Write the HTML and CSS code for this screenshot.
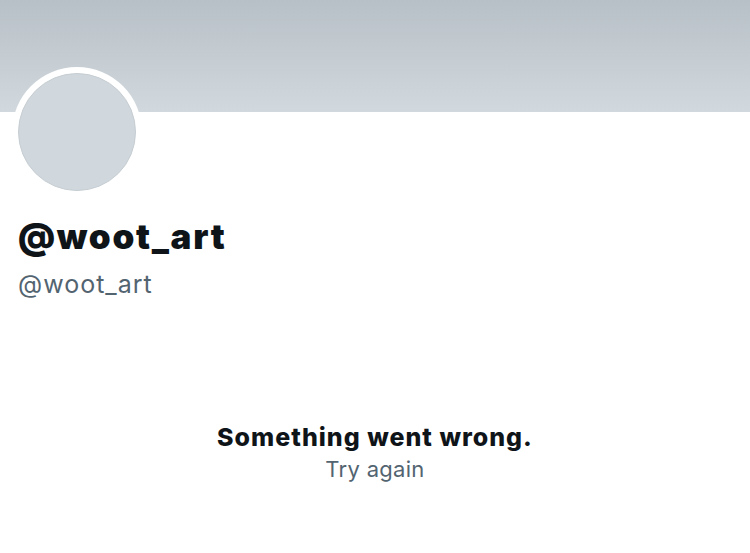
FILE: index.html
```html
<!DOCTYPE html>
<html>
<head>
<meta charset="utf-8">
<link rel="stylesheet" href="styles.css">
</head>
<body>
<div class="page">
  <div class="banner"></div>
  <div class="profile">
    <div class="avatar-ring"><div class="avatar"></div></div>
    <div class="name">@woot_art</div>
    <div class="handle">@woot_art</div>
  </div>
  <div class="error">
    <div class="error-title">Something went wrong.</div>
    <div class="error-retry">Try again</div>
  </div>
</div>
</body>
</html>
```
FILE: styles.css
```css
html, body {
  margin: 0;
  padding: 0;
  background: #ffffff;
}
body {
  font-family: Inter, "Noto Sans", sans-serif;
  width: 750px;
  height: 553px;
  overflow: hidden;
}
.banner {
  height: 112px;
  background: linear-gradient(to bottom, #b8c0c7, #d1d9de);
}
.profile {
  padding: 0 18px;
}
.avatar-ring {
  box-sizing: border-box;
  width: 130px;
  height: 130px;
  margin-top: -45px;
  margin-left: -6px;
  border-radius: 50%;
  background: #ffffff;
  display: flex;
  align-items: center;
  justify-content: center;
}
.avatar {
  box-sizing: border-box;
  width: 118px;
  height: 118px;
  border-radius: 50%;
  background: #d0d8dd;
  border: 1px solid #c6ced3;
}
.name {
  margin-top: 17px;
  font-size: 35px;
  font-weight: 900;
  letter-spacing: 1.7px;
  color: #0f1419;
  line-height: 44px;
}
.handle {
  margin-top: 11px;
  font-size: 25px;
  letter-spacing: 1px;
  color: #536471;
  line-height: 30px;
}
.error {
  margin-top: 122px;
  text-align: center;
}
.error-title {
  font-size: 25px;
  font-weight: 800;
  letter-spacing: 1px;
  color: #0f1419;
  line-height: 32px;
}
.error-retry {
  margin-top: 2px;
  font-size: 22px;
  letter-spacing: 0.3px;
  color: #536471;
  line-height: 28px;
}
```
